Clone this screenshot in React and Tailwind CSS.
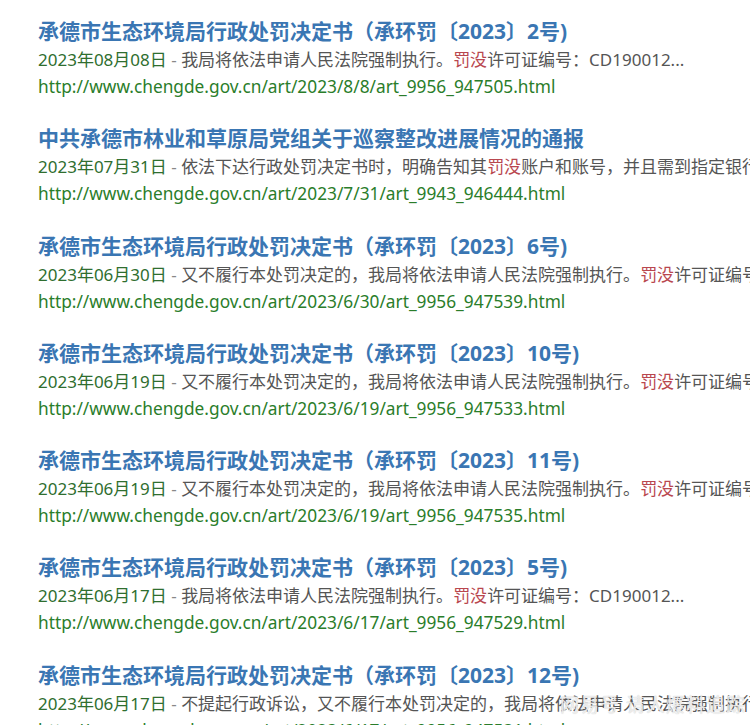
const items = [
    {
        title: '承德市生态环境局行政处罚决定书（承环罚〔2023〕2号)',
        date: '2023年08月08日',
        before: '我局将依法申请人民法院强制执行。',
        after: '许可证编号：CD190012...',
        url: 'http://www.chengde.gov.cn/art/2023/8/8/art_9956_947505.html',
    },
    {
        title: '中共承德市林业和草原局党组关于巡察整改进展情况的通报',
        date: '2023年07月31日',
        before: '依法下达行政处罚决定书时，明确告知其',
        after: '账户和账号，并且需到指定银行缴纳',
        url: 'http://www.chengde.gov.cn/art/2023/7/31/art_9943_946444.html',
    },
    {
        title: '承德市生态环境局行政处罚决定书（承环罚〔2023〕6号)',
        date: '2023年06月30日',
        before: '又不履行本处罚决定的，我局将依法申请人民法院强制执行。',
        after: '许可证编号：CD190012...',
        url: 'http://www.chengde.gov.cn/art/2023/6/30/art_9956_947539.html',
    },
    {
        title: '承德市生态环境局行政处罚决定书（承环罚〔2023〕10号)',
        date: '2023年06月19日',
        before: '又不履行本处罚决定的，我局将依法申请人民法院强制执行。',
        after: '许可证编号：CD190012...',
        url: 'http://www.chengde.gov.cn/art/2023/6/19/art_9956_947533.html',
    },
    {
        title: '承德市生态环境局行政处罚决定书（承环罚〔2023〕11号)',
        date: '2023年06月19日',
        before: '又不履行本处罚决定的，我局将依法申请人民法院强制执行。',
        after: '许可证编号：CD190012...',
        url: 'http://www.chengde.gov.cn/art/2023/6/19/art_9956_947535.html',
    },
    {
        title: '承德市生态环境局行政处罚决定书（承环罚〔2023〕5号)',
        date: '2023年06月17日',
        before: '我局将依法申请人民法院强制执行。',
        after: '许可证编号：CD190012...',
        url: 'http://www.chengde.gov.cn/art/2023/6/17/art_9956_947529.html',
    },
    {
        title: '承德市生态环境局行政处罚决定书（承环罚〔2023〕12号)',
        date: '2023年06月17日',
        before: '不提起行政诉讼，又不履行本处罚决定的，我局将依法申请人民法院强制执行。',
        after: '',
        noRed: true,
        url: 'http://www.chengde.gov.cn/art/2023/6/17/art_9956_947531.html',
    },
];

const App = () => {
    return (
        <div
            className="relative w-[750px] h-[725px] overflow-hidden bg-white pl-[38px] pt-[16px]"
            style={{ fontFamily: '"Noto Sans", "Noto Sans CJK SC", sans-serif' }}
        >
            {items.map((item, i) => (
                <div key={i} className="mb-[23.3px] w-[712px] overflow-hidden whitespace-nowrap">
                    {/* Title */}
                    <div className="h-[30px] leading-[30px] text-[21px] font-bold text-[#3a76b3]">
                        {item.title}
                    </div>
                    {/* Date + snippet */}
                    <div className="h-[27px] leading-[27px] text-[17px] text-[#555]">
                        <span className="text-[#2f6e2f]">{item.date}</span>
                        <span className="text-[#888]"> - </span>
                        {item.before}
                        {!item.noRed && <span className="text-[#b9474f]">罚没</span>}
                        {item.after}
                    </div>
                    {/* URL */}
                    <div className="h-[27px] leading-[27px] text-[17.3px] text-[#2a7d2a]">
                        {item.url}
                    </div>
                </div>
            ))}

            {/* Watermark */}
            <div className="absolute right-[4px] top-[691px] text-[19px] text-white/70 tracking-[1px] [text-shadow:0_0_1px_#bbb]">
                网易号 请人爆料追踪
            </div>
        </div>
    );
};

export default App;
